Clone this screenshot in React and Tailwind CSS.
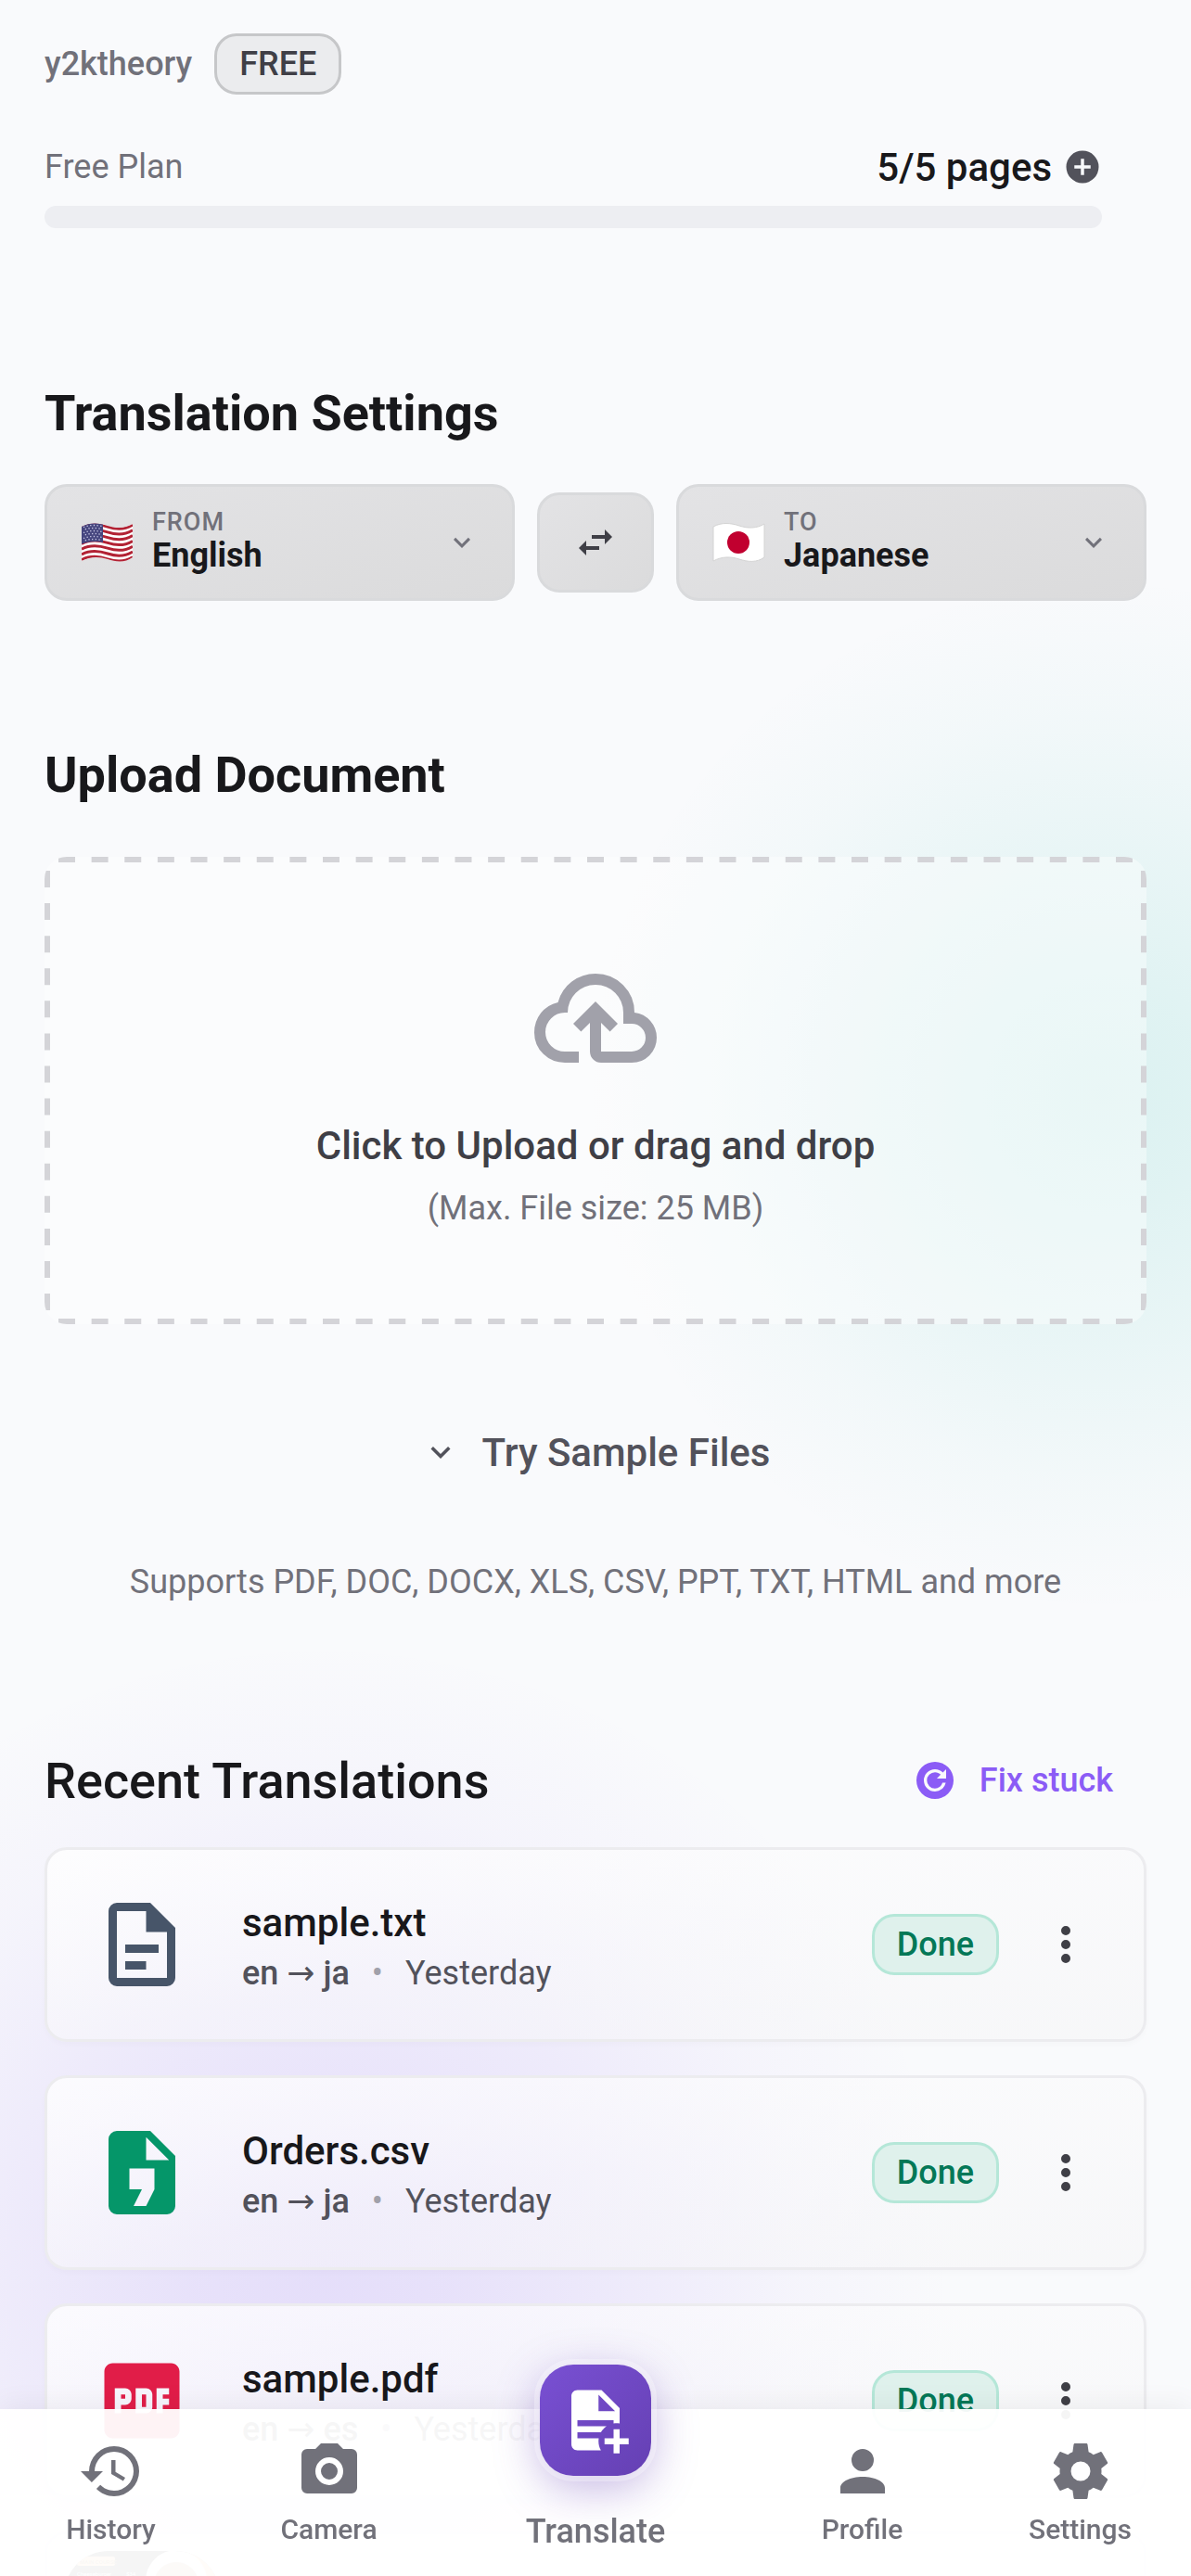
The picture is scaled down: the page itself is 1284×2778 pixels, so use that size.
const P = {
  plus: "M17,13H13V17H11V13H7V11H11V7H13V11H17M12,2A10,10 0 0,0 2,12A10,10 0 0,0 12,22A10,10 0 0,0 22,12A10,10 0 0,0 12,2Z",
  swap: "M21,9L17,5V8H10V10H17V13M7,11L3,15L7,19V16H14V14H7V11Z",
  chevron: "M7.41,8.58L12,13.17L16.59,8.58L18,10L12,16L6,10L7.41,8.58Z",
  cloud: "M6.5 20Q4.22 20 2.61 18.43 1 16.85 1 14.58 1 12.63 2.17 11.1 3.35 9.57 5.25 9.15 5.88 6.85 7.75 5.43 9.63 4 12 4 14.93 4 16.96 6.04 19 8.07 19 11 20.73 11.2 21.86 12.5 23 13.78 23 15.5 23 17.38 21.69 18.69 20.38 20 18.5 20H13Q12.18 20 11.59 19.41 11 18.83 11 18V12.85L9.4 14.4L8 13L12 9L16 13L14.6 14.4L13 12.85V18H18.5Q19.55 18 20.27 17.27 21 16.55 21 15.5 21 14.45 20.27 13.73 19.55 13 18.5 13H17V11Q17 8.93 15.54 7.46 14.08 6 12 6 9.93 6 8.46 7.46 7 8.93 7 11H6.5Q5.05 11 4.03 12.03 3 13.05 3 14.5 3 15.95 4.03 17 5.05 18 6.5 18H9V20M12 13Z",
  refresh: "M12,2A10,10 0 1,0 12,22A10,10 0 1,0 12,2M18,11H13L15.07,8.93C14.28,8.14 13.2,7.65 12,7.65A4.35,4.35 0 0,0 7.65,12A4.35,4.35 0 0,0 12,16.35C14,16.35 15.5,15.1 16,13.3H17.8A6,6 0 0,1 12,18A6,6 0 0,1 6,12A6,6 0 0,1 12,6C13.66,6 15.16,6.67 16.24,7.76L18,6V11Z",
  txt: "M6,2A2,2 0 0,0 4,4V20A2,2 0 0,0 6,22H18A2,2 0 0,0 20,20V8L14,2H6M6,4H13V9H18V20H6V4M8,12V14H16V12H8M8,16V18H13V16H8Z",
  csv: "M14,2H6A2,2 0 0,0 4,4V20A2,2 0 0,0 6,22H18A2,2 0 0,0 20,20V8L14,2M15,16L13,20H10L12,16H9V11H15V16M13,9V3.5L18.5,9H13Z",
  pdf: "M19 3H5C3.9 3 3 3.9 3 5V19C3 20.1 3.9 21 5 21H19C20.1 21 21 20.1 21 19V5C21 3.9 20.1 3 19 3M9.5 11.5C9.5 12.3 8.8 13 8 13H7V15H5.5V9H8C8.8 9 9.5 9.7 9.5 10.5V11.5M14.5 13.5C14.5 14.3 13.8 15 13 15H10.5V9H13C13.8 9 14.5 9.7 14.5 10.5V13.5M18.5 10.5H17V11.5H18.5V13H17V15H15.5V9H18.5V10.5M12 10.5H13V13.5H12V10.5M7 10.5H8V11.5H7V10.5Z",
  dots: "M12,16A2,2 0 0,1 14,18A2,2 0 0,1 12,20A2,2 0 0,1 10,18A2,2 0 0,1 12,16M12,10A2,2 0 0,1 14,12A2,2 0 0,1 12,14A2,2 0 0,1 10,12A2,2 0 0,1 12,10M12,4A2,2 0 0,1 14,6A2,2 0 0,1 12,8A2,2 0 0,1 10,6A2,2 0 0,1 12,4Z",
  history: "M13.5,8H12V13L16.28,15.54L17,14.33L13.5,12.25V8M13,3A9,9 0 0,0 4,12H1L4.96,16.03L9,12H6A7,7 0 0,1 13,5A7,7 0 0,1 20,12A7,7 0 0,1 13,19C11.07,19 9.32,18.21 8.06,16.94L6.64,18.36C8.27,20 10.5,21 13,21A9,9 0 0,0 22,12A9,9 0 0,0 13,3",
  camera: "M4,4H7L9,2H15L17,4H20A2,2 0 0,1 22,6V18A2,2 0 0,1 20,20H4A2,2 0 0,1 2,18V6A2,2 0 0,1 4,4M12,7A5,5 0 0,0 7,12A5,5 0 0,0 12,17A5,5 0 0,0 17,12A5,5 0 0,0 12,7M12,9A3,3 0 0,1 15,12A3,3 0 0,1 12,15A3,3 0 0,1 9,12A3,3 0 0,1 12,9Z",
  account: "M12,4A4,4 0 0,1 16,8A4,4 0 0,1 12,12A4,4 0 0,1 8,8A4,4 0 0,1 12,4M12,14C16.42,14 20,15.79 20,18V20H4V18C4,15.79 7.58,14 12,14Z",
  cog: "M12,15.5A3.5,3.5 0 0,1 8.5,12A3.5,3.5 0 0,1 12,8.5A3.5,3.5 0 0,1 15.5,12A3.5,3.5 0 0,1 12,15.5M19.43,12.97C19.47,12.65 19.5,12.33 19.5,12C19.5,11.67 19.47,11.34 19.43,11L21.54,9.37C21.73,9.22 21.78,8.95 21.66,8.73L19.66,5.27C19.54,5.05 19.27,4.96 19.05,5.05L16.56,6.05C16.04,5.66 15.5,5.32 14.87,5.07L14.5,2.42C14.46,2.18 14.25,2 14,2H10C9.75,2 9.54,2.18 9.5,2.42L9.13,5.07C8.5,5.32 7.96,5.66 7.44,6.05L4.95,5.05C4.73,4.96 4.46,5.05 4.34,5.27L2.34,8.73C2.21,8.95 2.27,9.22 2.46,9.37L4.57,11C4.53,11.34 4.5,11.67 4.5,12C4.5,12.33 4.53,12.65 4.57,12.97L2.46,14.63C2.27,14.78 2.21,15.05 2.34,15.27L4.34,18.73C4.46,18.95 4.73,19.03 4.95,18.95L7.44,17.94C7.96,18.34 8.5,18.68 9.13,18.93L9.5,21.58C9.54,21.82 9.75,22 10,22H14C14.25,22 14.46,21.82 14.5,21.58L14.87,18.93C15.5,18.67 16.04,18.34 16.56,17.94L19.05,18.95C19.27,19.03 19.54,18.95 19.66,18.73L21.66,15.27C21.78,15.05 21.73,14.78 21.54,14.63L19.43,12.97Z",
  docPlus: "M14 2H6C4.89 2 4 2.89 4 4V20C4 21.11 4.89 22 6 22H13.81C13.28 21.09 13 20.05 13 19C13 18.67 13.03 18.33 13.08 18H6V16H13.81C14.27 15.2 14.91 14.5 15.68 14H6V12H18V13.08C18.33 13.03 18.67 13 19 13S19.67 13.03 20 13.08V8L14 2M13 9V3.5L18.5 9H13M18 15V18H15V20H18V23H20V20H23V18H20V15H18Z",
};

function Icon({ name, className }) {
  return (
    <svg viewBox="0 0 24 24" className={`shrink-0 fill-current ${className}`} aria-hidden="true">
      <path d={P[name]} fillRule="evenodd" />
    </svg>
  );
}

const WAVE = "M1 4C10 -1 20 0 29 3S48 6 56 1V37C48 43 38 42 29 39S10 36 1 41Z";

function UsFlag() {
  return (
    <svg viewBox="0 0 57 42" className="h-[42px] w-[57px] shrink-0" role="img" aria-label="US flag">
      <defs><clipPath id="us"><path d={WAVE} /></clipPath></defs>
      <g clipPath="url(#us)">
        <rect width="57" height="42" fill="#fff" />
        {[0, 1, 2, 3, 4, 5, 6].map((i) => (
          <path key={i} d="M1 4C10 -1 20 0 29 3S48 6 56 1" transform={`translate(0 ${1 + i * 5.8})`} fill="none" stroke="#b22234" strokeWidth="3" />
        ))}
        <path d="M0 0H24V21C16 19 8 20 0 23Z" fill="#46467f" />
        {[0, 1, 2, 3, 4, 5].map((r) => (
          <path key={r} d={`M3 ${4.5 + r * 3}C9 ${2 + r * 3} 16 ${2 + r * 3} 23 ${3.5 + r * 3}`} fill="none" stroke="#c9c9e6" strokeWidth="1.3" strokeDasharray="1.3 2.4" strokeDashoffset={(r % 2) * 1.8} />
        ))}
      </g>
    </svg>
  );
}

function JpFlag() {
  return (
    <svg viewBox="0 0 57 42" className="h-[42px] w-[57px] shrink-0" role="img" aria-label="Japan flag">
      <path d={WAVE} fill="#fff" stroke="#d3d3d3" strokeWidth="1" />
      <circle cx="28" cy="21" r="12" fill="#c1002f" />
    </svg>
  );
}

function LangButton({ flag, label, value }) {
  return (
    <button type="button" className="flex h-[126px] min-w-0 flex-1 items-center rounded-3xl border-3 border-[#d9dadc] bg-linear-to-br from-[#e3e3e5] to-[#dbdbdc] px-9 text-left">
      {flag}
      <span className="ml-5 flex flex-1 flex-col pb-1.5">
        <span className="text-[27px] leading-[34px] font-medium tracking-[1px] text-[#71717a]">{label}</span>
        <span className="text-[36px] leading-[38px] font-bold text-[#18181b]">{value}</span>
      </span>
      <Icon name="chevron" className="size-9 text-[#71717a]" />
    </button>
  );
}

const FILES = [
  { name: "sample.txt", icon: "txt", color: "text-[#475569]", to: "ja" },
  { name: "Orders.csv", icon: "csv", color: "text-[#059669]", to: "ja" },
  { name: "sample.pdf", icon: "pdf", color: "text-[#e11d48]", to: "es" },
];

const CARD = "rounded-3xl border-3 border-[#ececef] bg-linear-to-br from-white/80 via-[#fafafb]/55 to-[#f5f5f6]/55 shadow-[0_3px_6px_rgba(0,0,0,0.02)]";

function FileCard({ file }) {
  return (
    <li className={`flex h-[210px] items-center px-12 ${CARD}`}>
      <Icon name={file.icon} className={`size-[108px] ${file.color}`} />
      <div className="ml-[54px] min-w-0 flex-1 pt-[3px]">
        <p className="text-[42px] leading-[58px] font-medium text-[#18181b]">{file.name}</p>
        <p className="flex items-center text-[36px] leading-[50px] text-[#52525b]">
          <span className="font-medium">en <span className="font-['DejaVu_Sans',sans-serif] font-normal">→</span> {file.to}</span>
          <span className="mx-6 text-[#a1a1aa]">•</span>
          <span>Yesterday</span>
        </p>
      </div>
      <span className="flex h-[66px] items-center rounded-3xl border-3 border-[#b5e7d8] bg-[#dff1ec] px-6 text-[36px] font-medium text-[#047857]">Done</span>
      <button type="button" aria-label={`Options for ${file.name}`} className="ml-9 flex size-[72px] items-center justify-center text-[#3f3f46]">
        <Icon name="dots" className="size-[60px]" />
      </button>
    </li>
  );
}

function NavItem({ icon, label }) {
  return (
    <a href="#" className="flex flex-1 flex-col items-center pt-[31px] text-[#71717a]">
      <Icon name={icon} className="size-[72px]" />
      <span className="mt-[9px] text-[30px] leading-[36px] font-medium">{label}</span>
    </a>
  );
}

export default function App() {
  return (
    <div className="relative h-screen overflow-hidden bg-[#f9fafc] font-[Roboto,'Liberation_Sans',sans-serif] text-[#18181b]">
      <div className="absolute top-[620px] -right-[466px] size-[1120px] rounded-full bg-[radial-gradient(closest-side,rgba(20,184,166,0.13),rgba(20,184,166,0.11)_20%,rgba(20,184,166,0.07)_48%,rgba(20,184,166,0.028)_75%,transparent)]" />
      <div className="absolute top-[1770px] -left-[333px] size-[1360px] rounded-full bg-[radial-gradient(closest-side,rgba(124,77,240,0.16),rgba(124,77,240,0.14)_20%,rgba(124,77,240,0.085)_50%,rgba(124,77,240,0.03)_75%,transparent)]" />

      <main className="relative px-12 pt-9">
        <header className="flex h-[66px] items-center gap-6 text-[36px] font-medium">
          <span className="text-[#71717a]">y2ktheory</span>
          <span className="flex h-full items-center rounded-3xl border-3 border-[#c6c7c9] bg-[#ebecee] px-6 text-[#3f3f46]">FREE</span>
        </header>

        <section className="mt-12 pr-12">
          <div className="flex h-[60px] items-center justify-between">
            <span className="text-[36px] text-[#71717a]">Free Plan</span>
            <span className="flex items-center gap-3 text-[42px] font-medium">
              5/5 pages
              <button type="button" aria-label="Add pages" className="text-[#52525b]"><Icon name="plus" className="size-[42px]" /></button>
            </span>
          </div>
          <div className="mt-3 h-6 rounded-full bg-[#edeef2]" />
        </section>

        <section className="mt-[164px]">
          <h2 className="text-[54px] leading-[72px] font-bold">Translation Settings</h2>
          <div className="mt-10 flex items-center gap-6">
            <LangButton flag={<UsFlag />} label="FROM" value="English" />
            <button type="button" aria-label="Swap languages" className="flex h-[108px] w-[126px] items-center justify-center rounded-3xl border-3 border-[#d9dadc] bg-linear-to-br from-[#e3e3e5] to-[#dbdbdc] text-[#3f3f46]">
              <Icon name="swap" className="size-12" />
            </button>
            <LangButton flag={<JpFlag />} label="TO" value="Japanese" />
          </div>
        </section>

        <section className="mt-[152px]">
          <h2 className="text-[54px] leading-[72px] font-bold">Upload Document</h2>
          <button type="button" className="relative mt-[52px] flex h-[504px] w-full flex-col items-center rounded-3xl bg-white/40 pt-[102px]">
            <svg className="absolute inset-0 size-full rounded-3xl fill-none stroke-[#d4d4d8] stroke-6" aria-hidden="true">
              <g strokeDasharray="18 17.625">
                <line x1="15" y1="3" x2="100%" y2="3" />
                <line x1="15" y1="501" x2="100%" y2="501" />
              </g>
              <g strokeDasharray="18 17.080">
                <line x1="3" y1="15" x2="3" y2="100%" />
                <svg x="100%" overflow="visible">
                  <line x1="-3" y1="15" x2="-3" y2="100%" />
                </svg>
              </g>
            </svg>
            <Icon name="cloud" className="size-36 text-[#a1a1aa]" />
            <span className="mt-9 text-[42px] leading-[60px] font-medium text-[#3f3f46]">Click to Upload or drag and drop</span>
            <span className="mt-2.5 text-[36px] leading-[54px] text-[#71717a]">(Max. File size: 25 MB)</span>
          </button>
          <button type="button" className="mx-auto mt-[105px] flex h-[66px] items-center gap-6 text-[42px] font-medium text-[#52525b]">
            <Icon name="chevron" className="size-[42px]" />
            Try Sample Files
          </button>
          <p className="mt-20 text-center text-[36px] leading-[54px] text-[#71717a]">Supports PDF, DOC, DOCX, XLS, CSV, PPT, TXT, HTML and more</p>
        </section>

        <section className="mt-[151px]">
          <div className="flex h-[72px] items-center justify-between pr-9">
            <h2 className="text-[54px] font-medium">Recent Translations</h2>
            <button type="button" className="flex items-center gap-6 text-[36px] font-medium text-[#8b5cf6]">
              <Icon name="refresh" className="size-12" />
              Fix stuck
            </button>
          </div>
          <ul className="mt-9 flex flex-col gap-9">
            {FILES.map((f) => <FileCard key={f.name} file={f} />)}
            <li className={`h-[210px] px-[18px] pt-[18px] ${CARD}`}>
              <svg viewBox="0 0 168 168" className="size-[168px] rounded-[48px] bg-[#3a3a3a]" aria-hidden="true">
                <circle cx="168" cy="30" r="46" fill="#f6c88e" />
                <circle cx="121" cy="32" r="33" fill="#eeeeee" />
                <circle cx="121" cy="36" r="24" fill="#b99a7c" />
                <rect x="14" y="6" width="41" height="10" rx="2" fill="#f6c88e" />
                <text x="17" y="14" fontSize="6" fontWeight="700" fill="#8a6a3a">MAIN COURSE</text>
                <text x="14" y="27" fontSize="6" fill="#fff">Cheeseburger</text>
                <text x="67" y="27" fontSize="6" fill="#fff">$34</text>
              </svg>
            </li>
          </ul>
        </section>
      </main>

      <nav className="fixed inset-x-0 bottom-0 flex h-[180px] bg-white/95 px-[2px] shadow-[0_-3px_30px_rgba(0,0,0,0.06)]">
        <NavItem icon="history" label="History" />
        <NavItem icon="camera" label="Camera" />
        <a href="#" className="flex w-[340px] flex-col items-center text-[#71717a]">
          <span className="-mt-12 flex size-[120px] items-center justify-center rounded-[36px] bg-linear-to-br from-[#7950d3] to-[#6540b3] text-white shadow-[0_0_0_6px_rgba(255,255,255,0.3),0_12px_48px_rgba(103,65,183,0.4)]">
            <Icon name="docPlus" className="size-[78px]" />
          </span>
          <span className="mt-9 text-[36px] leading-[48px] font-medium">Translate</span>
        </a>
        <NavItem icon="account" label="Profile" />
        <NavItem icon="cog" label="Settings" />
      </nav>
    </div>
  );
}
